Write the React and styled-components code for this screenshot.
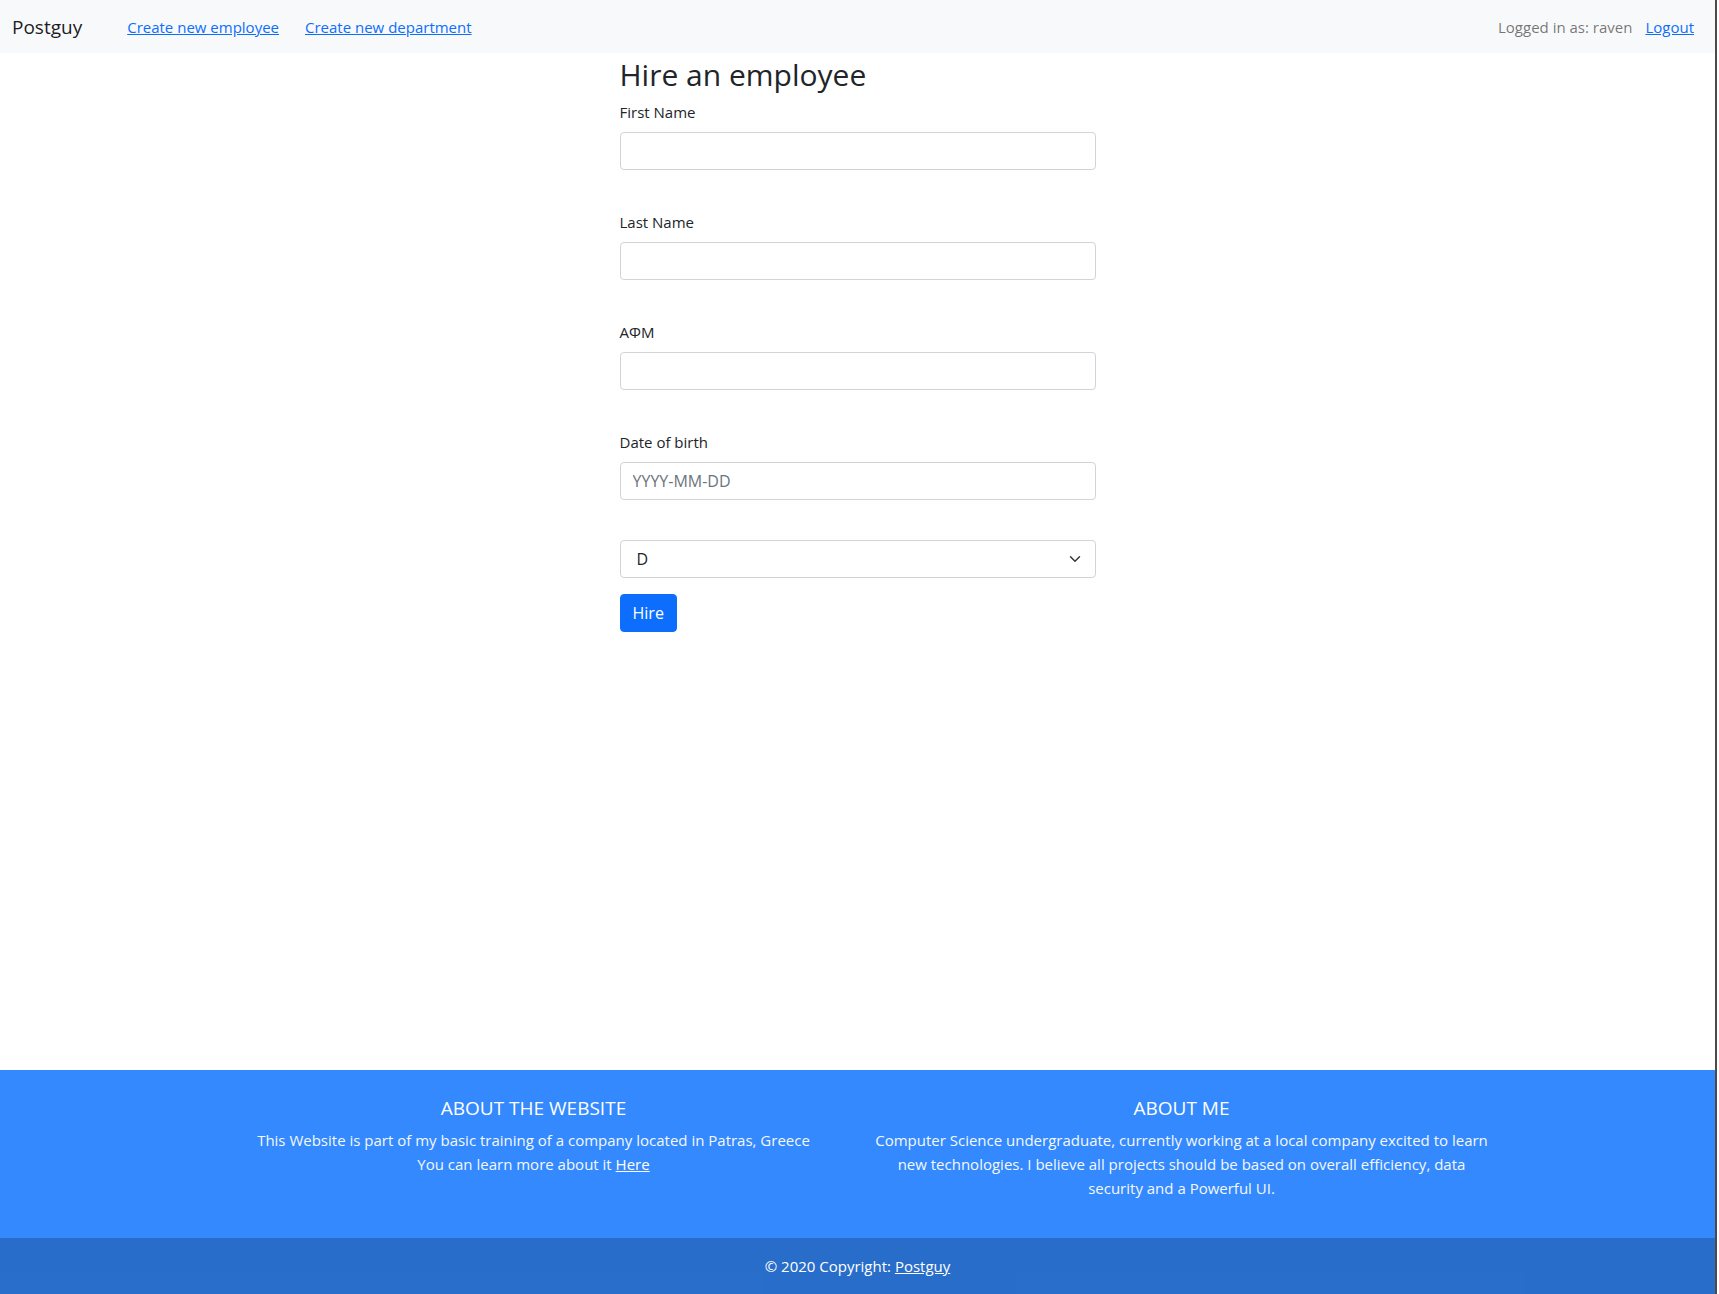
import React from 'react';
import styled, { createGlobalStyle } from 'styled-components';

const GlobalStyle = createGlobalStyle`
  *, *::before, *::after {
    box-sizing: border-box;
  }
  body {
    margin: 0;
    font-family: "Open Sans", "Noto Sans", "Liberation Sans", sans-serif;
    font-size: 15px;
    line-height: 24px;
    color: #212529;
    background: #fff;
  }
`;

const Page = styled.div`
  display: flex;
  flex-direction: column;
  min-height: 100vh;
  margin-right: 2px;
  border-right: 2px solid #4b4b4b;
`;

const Navbar = styled.nav`
  display: flex;
  align-items: center;
  height: 53px;
  padding: 0 21px 0 12px;
  background: #f8f9fa;
`;

const Brand = styled.span`
  font-size: 19px;
  color: rgba(0, 0, 0, 0.9);
  margin-right: 45px;
`;

const NavLinks = styled.div`
  display: flex;
  align-items: center;
  gap: ${(p) => p.$gap || 26}px;
  margin-left: ${(p) => (p.$right ? 'auto' : '0')};
`;

const NavLink = styled.a`
  color: #0d6efd;
  text-decoration: underline;
  cursor: pointer;
`;

const NavText = styled.span`
  color: rgba(0, 0, 0, 0.55);
`;

const Main = styled.main`
  flex: 1;
  display: flex;
  justify-content: center;
`;

const FormColumn = styled.form`
  width: 476px;
  display: flex;
  flex-direction: column;
`;

const Title = styled.h2`
  margin: 4px 0 7px;
  font-size: 30px;
  font-weight: 400;
  line-height: 36px;
`;

const Field = styled.div`
  display: flex;
  flex-direction: column;
  margin-bottom: ${(p) => (p.$last ? 16 : 40)}px;
`;

const Label = styled.label`
  margin-bottom: 8px;
`;

const Input = styled.input`
  height: 38px;
  padding: 6px 12px;
  font: inherit;
  font-size: 16px;
  color: #212529;
  border: 1px solid #ced4da;
  border-radius: 4px;
  outline: none;

  &::placeholder {
    color: #6c757d;
  }
`;

const Select = styled.select`
  height: 38px;
  padding: 6px 36px 6px 16px;
  font: inherit;
  font-size: 16px;
  color: #212529;
  background-color: #fff;
  background-image: url("data:image/svg+xml,%3csvg xmlns='http://www.w3.org/2000/svg' viewBox='0 0 16 16'%3e%3cpath fill='none' stroke='%23343a40' stroke-linecap='round' stroke-linejoin='round' stroke-width='2' d='M2 5l6 6 6-6'/%3e%3c/svg%3e");
  background-repeat: no-repeat;
  background-position: right 12px center;
  background-size: 16px 12px;
  border: 1px solid #ced4da;
  border-radius: 4px;
  appearance: none;
  outline: none;
`;

const HireButton = styled.button`
  align-self: flex-start;
  height: 38px;
  padding: 0 12px;
  font: inherit;
  font-size: 16px;
  color: #fff;
  background: #0d6efd;
  border: 1px solid #0d6efd;
  border-radius: 4px;
`;

const Footer = styled.footer`
  background: #3389fd;
  color: #fff;
`;

const FooterRow = styled.div`
  display: grid;
  grid-template-columns: repeat(2, 648px);
  justify-content: center;
  padding: 26px 0 38px;
`;

const FooterCol = styled.div`
  padding: 0 12px;
  text-align: center;
`;

const FooterHeading = styled.h5`
  margin: 0 0 8px;
  font-size: 19px;
  font-weight: 400;
  line-height: 24px;
  text-transform: uppercase;
`;

const FooterText = styled.p`
  margin: 0;
  font-size: 15px;
  color: #f4f8ff;
`;

const FooterLink = styled.a`
  color: #fff;
  text-decoration: underline;
`;

const CopyBar = styled.div`
  padding: 16px;
  text-align: center;
  background: rgba(0, 0, 0, 0.2);
`;

const App = () => (
  <>
    <GlobalStyle />
    <Page>
      <Navbar>
        <Brand>Postguy</Brand>
        <NavLinks>
          <NavLink>Create new employee</NavLink>
          <NavLink>Create new department</NavLink>
        </NavLinks>
        <NavLinks $right $gap={13}>
          <NavText>Logged in as: raven</NavText>
          <NavLink>Logout</NavLink>
        </NavLinks>
      </Navbar>

      <Main>
        <FormColumn onSubmit={(e) => e.preventDefault()}>
          <Title>Hire an employee</Title>
          <Field>
            <Label>First Name</Label>
            <Input type="text" />
          </Field>
          <Field>
            <Label>Last Name</Label>
            <Input type="text" />
          </Field>
          <Field>
            <Label>ΑΦΜ</Label>
            <Input type="text" />
          </Field>
          <Field>
            <Label>Date of birth</Label>
            <Input type="text" placeholder="YYYY-MM-DD" />
          </Field>
          <Field $last>
            <Select defaultValue="D">
              <option value="D">D</option>
            </Select>
          </Field>
          <HireButton type="submit">Hire</HireButton>
        </FormColumn>
      </Main>

      <Footer>
        <FooterRow>
          <FooterCol>
            <FooterHeading>About the website</FooterHeading>
            <FooterText>
              This Website is part of my basic training of a company located in Patras, Greece
              <br />
              You can learn more about it <FooterLink>Here</FooterLink>
            </FooterText>
          </FooterCol>
          <FooterCol>
            <FooterHeading>About me</FooterHeading>
            <FooterText>
              Computer Science undergraduate, currently working at a local company excited to learn
              new technologies. I believe all projects should be based on overall efficiency, data
              security and a Powerful UI.
            </FooterText>
          </FooterCol>
        </FooterRow>
        <CopyBar>
          © 2020 Copyright: <FooterLink>Postguy</FooterLink>
        </CopyBar>
      </Footer>
    </Page>
  </>
);

export default App;
